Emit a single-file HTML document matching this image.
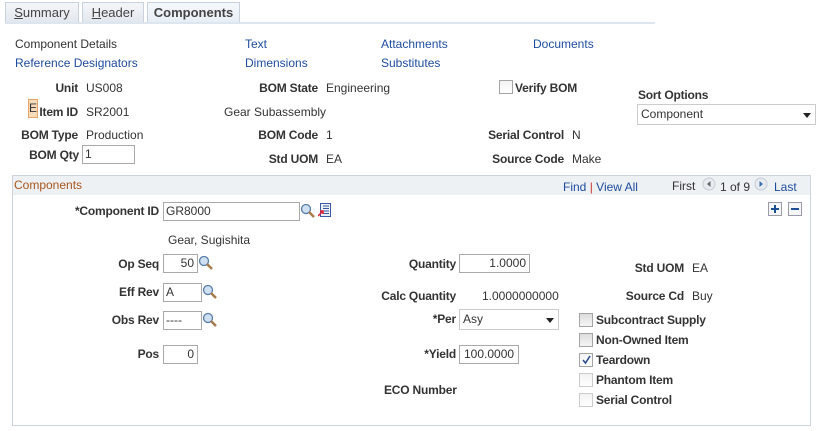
<!DOCTYPE html>
<html><head><meta charset="utf-8"><style>
*{margin:0;padding:0;box-sizing:border-box}
body{width:826px;height:431px;background:#fff;font-family:"Liberation Sans",Arial,sans-serif;font-size:12px;color:#333;position:relative;overflow:hidden}
.a{position:absolute;line-height:14px;white-space:nowrap}
.l{position:absolute;line-height:14px;white-space:nowrap;font-weight:bold;text-align:right;color:#333;letter-spacing:-0.2px}
.lk{color:#1e4c9e}
.in{position:absolute;border:1px solid #a9a9a9;background:#fff;height:19px;line-height:17px;padding:0 3px;font-size:12px;color:#333;white-space:nowrap}
.r{text-align:right}
.tab{position:absolute;top:2px;height:21px;border:1px solid #c9d1dc;border-bottom:none;background:linear-gradient(#f4f6f9,#e2e7ee);text-align:center;line-height:20px;font-size:13px;color:#444}
.cb{position:absolute;width:14px;height:14px;border:1px solid #a4a4a4;background:linear-gradient(#f2f2f2,#fff)}
.mg{position:absolute;width:16px;height:16px}
</style></head><body>
<div class="tab" style="left:5px;width:74px"><u>S</u>ummary</div>
<div class="tab" style="left:82px;width:62px"><u>H</u>eader</div>
<div class="tab" style="left:147px;width:93px;background:linear-gradient(#f5f8fb,#e6edf4);font-weight:bold;height:22px">Components</div>
<div style="position:absolute;left:5px;top:22px;width:650px;height:2px;background:#dde5ee"></div>

<div class="a" style="left:15px;top:37px">Component Details</div>
<div class="a lk" style="left:245px;top:37px">Text</div>
<div class="a lk" style="left:381px;top:37px">Attachments</div>
<div class="a lk" style="left:533px;top:37px">Documents</div>
<div class="a lk" style="left:15px;top:56px">Reference Designators</div>
<div class="a lk" style="left:245px;top:56px">Dimensions</div>
<div class="a lk" style="left:381px;top:56px">Substitutes</div>

<div class="l" style="right:748px;top:81px">Unit</div><div class="a" style="left:86px;top:81px">US008</div>
<div class="l" style="right:508px;top:81px">BOM State</div><div class="a" style="left:326px;top:81px">Engineering</div>
<div class="cb" style="left:499px;top:80px"></div><div class="l" style="left:515px;top:81px">Verify BOM</div>
<div class="l" style="left:638px;top:88px">Sort Options</div>
<div class="in" style="left:637px;top:104px;width:179px;height:21px;line-height:19px;border-color:#ccc">Component<span style="position:absolute;right:4px;top:8px;border:4px solid transparent;border-top:5px solid #222;border-bottom:none"></span></div>

<div style="position:absolute;left:28px;top:99px;width:10px;height:19px;background:#fbdcb8;border:1px solid #e3a36a;font-size:12px;line-height:17px;text-align:center">E</div>
<div class="l" style="right:748px;top:105px">Item ID</div><div class="a" style="left:86px;top:105px">SR2001</div>
<div class="a" style="left:224px;top:105px">Gear Subassembly</div>

<div class="l" style="right:748px;top:128px">BOM Type</div><div class="a" style="left:86px;top:128px">Production</div>
<div class="l" style="right:508px;top:128px">BOM Code</div><div class="a" style="left:326px;top:128px">1</div>
<div class="l" style="right:262px;top:128px">Serial Control</div><div class="a" style="left:572px;top:128px">N</div>
<div class="l" style="right:747px;top:148px">BOM Qty</div><div class="in" style="left:82px;top:145px;width:53px;padding-left:2px">1</div>
<div class="l" style="right:508px;top:152px">Std UOM</div><div class="a" style="left:326px;top:152px">EA</div>
<div class="l" style="right:262px;top:152px">Source Code</div><div class="a" style="left:572px;top:152px">Make</div>

<div style="position:absolute;left:12px;top:175px;width:799px;height:251px;border:1px solid #cdd3da"></div>
<div style="position:absolute;left:13px;top:176px;width:797px;height:19px;background:#eef1f4"></div>
<div class="a" style="left:14px;top:178px;color:#a8561c">Components</div>
<div class="a" style="left:563px;top:180px"><span class="lk">Find</span> <span style="color:#c33">|</span> <span class="lk">View All</span></div>
<div class="a" style="left:672px;top:179px">First</div>
<svg style="position:absolute;left:702px;top:177px" width="14" height="14"><circle cx="7" cy="7" r="6" fill="#e8ecf0" stroke="#c5ccd4"/><path d="M8.5 4L5 7l3.5 3z" fill="#666"/></svg>
<div class="a" style="left:720px;top:180px">1 of 9</div>
<svg style="position:absolute;left:754px;top:177px" width="14" height="14"><circle cx="7" cy="7" r="6" fill="#e8ecf0" stroke="#c5ccd4"/><path d="M5.5 4L9 7l-3.5 3z" fill="#3a6fb0"/></svg>
<div class="a lk" style="left:774px;top:180px">Last</div>
<svg style="position:absolute;left:768px;top:202px" width="34" height="14"><rect x=".5" y=".5" width="13" height="13" fill="#f4f6f8" stroke="#99a"/><path d="M3 7h8M7 3v8" stroke="#1c4f94" stroke-width="2"/><rect x="20.5" y=".5" width="13" height="13" fill="#f4f6f8" stroke="#99a"/><path d="M23 7h8" stroke="#1c4f94" stroke-width="2"/></svg>

<div class="l" style="right:667px;top:204px">*Component ID</div>
<div class="in" style="left:163px;top:202px;width:137px;padding-left:2px">GR8000</div>
<svg class="mg" style="left:300px;top:203px" viewBox="0 0 16 16"><circle cx="6" cy="6" r="4.5" fill="#cfe0f2" stroke="#567ca8" stroke-width="1.3"/><path d="M9 9l5 5" stroke="#a67b4c" stroke-width="2.5"/></svg>
<svg style="position:absolute;left:318px;top:203px" width="13" height="14"><rect x="2.5" y=".5" width="10" height="13" fill="#e9eef8" stroke="#3a5aa8"/><path d="M5 3h6M5 5.5h6M5 8h6M5 10.5h6" stroke="#3a5aa8"/><path d="M0 13l5-5M2 8h3v3" stroke="#d23" stroke-width="1.5" fill="none"/></svg>
<div class="a" style="left:168px;top:233px">Gear, Sugishita</div>

<div class="l" style="right:667px;top:257px">Op Seq</div><div class="in r" style="left:163px;top:254px;width:35px">50</div>
<svg class="mg" style="left:198px;top:255px" viewBox="0 0 16 16"><circle cx="6" cy="6" r="4.5" fill="#cfe0f2" stroke="#567ca8" stroke-width="1.3"/><path d="M9 9l5 5" stroke="#a67b4c" stroke-width="2.5"/></svg>
<div class="l" style="right:667px;top:285px">Eff Rev</div><div class="in" style="left:163px;top:283px;width:39px;padding-left:2px">A</div>
<svg class="mg" style="left:202px;top:284px" viewBox="0 0 16 16"><circle cx="6" cy="6" r="4.5" fill="#cfe0f2" stroke="#567ca8" stroke-width="1.3"/><path d="M9 9l5 5" stroke="#a67b4c" stroke-width="2.5"/></svg>
<div class="l" style="right:667px;top:313px">Obs Rev</div><div class="in" style="left:163px;top:311px;width:39px;padding-left:2px">----</div>
<svg class="mg" style="left:202px;top:312px" viewBox="0 0 16 16"><circle cx="6" cy="6" r="4.5" fill="#cfe0f2" stroke="#567ca8" stroke-width="1.3"/><path d="M9 9l5 5" stroke="#a67b4c" stroke-width="2.5"/></svg>
<div class="l" style="right:667px;top:347px">Pos</div><div class="in r" style="left:163px;top:345px;width:35px">0</div>

<div class="l" style="right:370px;top:257px">Quantity</div><div class="in r" style="left:459px;top:254px;width:71px">1.0000</div>
<div class="l" style="right:370px;top:289px">Calc Quantity</div><div class="a" style="left:482px;top:289px">1.0000000000</div>
<div class="l" style="right:370px;top:312px">*Per</div>
<div class="in" style="left:459px;top:309px;width:100px;height:21px;line-height:19px;border-color:#ccc">Asy<span style="position:absolute;right:4px;top:8px;border:4px solid transparent;border-top:5px solid #222;border-bottom:none"></span></div>
<div class="l" style="right:370px;top:347px">*Yield</div><div class="in" style="left:459px;top:345px;width:60px;padding-left:4px">100.0000</div>
<div class="l" style="left:384px;top:383px">ECO Number</div>

<div class="l" style="right:142px;top:261px">Std UOM</div><div class="a" style="left:692px;top:261px">EA</div>
<div class="l" style="right:142px;top:289px">Source Cd</div><div class="a" style="left:692px;top:289px">Buy</div>

<div class="cb" style="left:579px;top:313px;background:linear-gradient(#ddd,#f5f5f5)"></div><div class="l" style="left:596px;top:313px">Subcontract Supply</div>
<div class="cb" style="left:579px;top:333px;background:linear-gradient(#ddd,#f5f5f5)"></div><div class="l" style="left:596px;top:333px">Non-Owned Item</div>
<div class="cb" style="left:579px;top:353px"><svg width="12" height="12" style="position:absolute;left:0;top:0"><path d="M3 6l2.5 3L10 2" stroke="#2b4f8c" stroke-width="1.6" fill="none"/></svg></div><div class="l" style="left:596px;top:353px">Teardown</div>
<div class="cb" style="left:579px;top:373px;border-color:#ccc"></div><div class="l" style="left:596px;top:373px">Phantom Item</div>
<div class="cb" style="left:579px;top:393px;border-color:#ccc"></div><div class="l" style="left:596px;top:393px">Serial Control</div>
</body></html>
